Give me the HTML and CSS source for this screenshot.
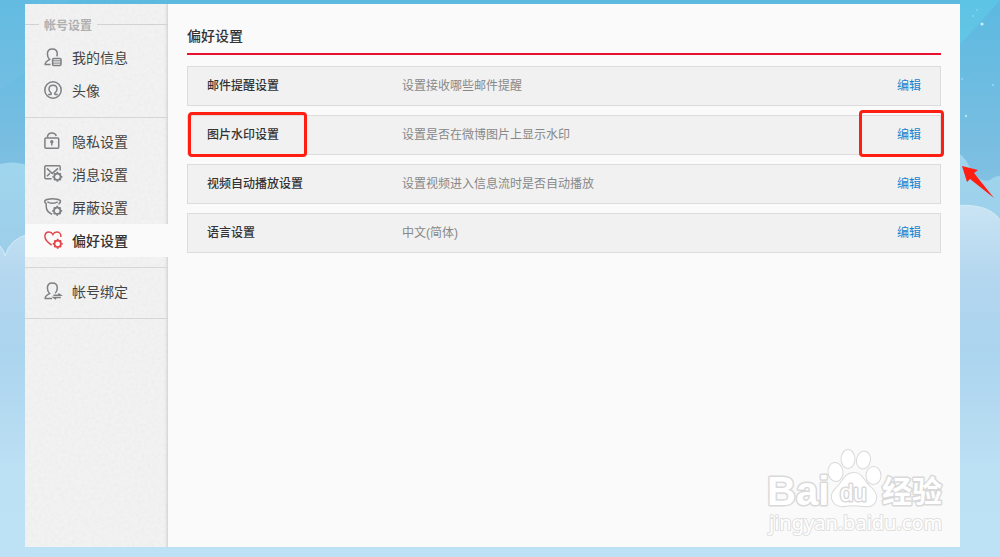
FILE: index.html
```html
<!DOCTYPE html>
<html lang="zh-CN">
<head>
    <meta charset="UTF-8">
    <meta name="viewport" content="width=device-width, initial-scale=1.0">
    <title>偏好设置</title>
    <link rel="stylesheet" href="styles.css">
</head>
<body>
    <!-- sky -->
    <svg class="sky" viewBox="0 0 1000 557" preserveAspectRatio="none" aria-hidden="true">
        <defs>
            <linearGradient id="cloud-back" x1="0" y1="0" x2="0" y2="1">
                <stop offset="0" stop-color="#9fd6ed"/>
                <stop offset="1" stop-color="#9cc9e8"/>
            </linearGradient>
            <linearGradient id="cloud-front" gradientUnits="userSpaceOnUse" x1="0" y1="205" x2="0" y2="557">
                <stop offset="0" stop-color="#c9e4f4"/>
                <stop offset="0.2" stop-color="#b4d7ef"/>
                <stop offset="0.42" stop-color="#abd4ee"/>
                <stop offset="0.75" stop-color="#bce0f4"/>
                <stop offset="1" stop-color="#bde1f5"/>
            </linearGradient>
        </defs>
        <path d="M0 0H70L25 72L0 90Z" fill="#fff" opacity=".04"/>
        <path d="M1000 0L960 45V0Z" fill="#5fd0ea" opacity=".5"/>
        <path d="M0 164Q14 160 30 166V300H0Z" fill="url(#cloud-back)"/>
        <path d="M950 150Q964 153 970 168Q980 184 990 180Q994 176 1000 176V300H950Z" fill="url(#cloud-back)"/>
        <path d="M0 246Q4 250 5 256Q10 238 30 234V557H0Z" fill="url(#cloud-front)"/>
        <path d="M950 206Q988 202 1000 220V557H950Z" fill="url(#cloud-front)"/>
        <path d="M0 246Q4 250 5 256Q10 238 30 234M950 206Q988 202 1000 220" fill="none" stroke="#d2ebf7"/>
        <g fill="#c5ecf7">
            <circle cx="982" cy="24" r="1.6"/>
            <circle cx="973" cy="16" r="1" opacity=".4"/>
            <circle cx="977" cy="10" r="1" opacity=".4"/>
            <circle cx="962" cy="79" r="1" opacity=".5"/>
            <circle cx="993" cy="85" r="1" opacity=".6"/>
            <circle cx="966" cy="116" r="1.2" opacity=".8"/>
        </g>
    </svg>

    <svg class="defs" aria-hidden="true">
        <symbol id="gear" viewBox="-6 -6 12 12">
            <circle r="3.2" fill="none" stroke="currentColor" stroke-width="1.8"/>
            <path d="M0-5V-3.6M0 5V3.6M-5 0H-3.6M5 0H3.6M-3.4-3.4L-2.5-2.5M3.4 3.4L2.5 2.5M-3.4 3.4L-2.5 2.5M3.4-3.4L2.5-2.5" stroke="currentColor" stroke-width="1.8"/>
        </symbol>
    </svg>

    <div class="panel">
        <nav class="sidebar">
            <svg class="grain" aria-hidden="true">
                <filter id="noise">
                    <feTurbulence type="fractalNoise" baseFrequency="0.3" numOctaves="2"/>
                    <feColorMatrix values="0 0 0 0 .4  0 0 0 0 .4  0 0 0 0 .4  .5 0 0 0 -.17"/>
                </filter>
                <rect width="100%" height="100%" filter="url(#noise)"/>
            </svg>
            <h2 class="side-title">帐号设置</h2>
            <ul class="menu">
                <li><a class="menu-item" href="#">
                    <svg class="icon" viewBox="0 0 18 18"><path d="M6.5 16.4H1.2C.9 14 3 12.9 5.6 11.6C4.1 10.2 3.4 8.2 3.4 6C3.4 2.9 5.4 1 8.3 1S13.3 2.9 13.3 6C13.3 7 13.1 7.6 12.7 8.4"/><rect x="8.6" y="10.4" width="8.4" height="7" rx="1.2"/><path d="M9 12.8H17M9 15.1H17" stroke-width="1"/></svg>
                    我的信息</a></li>
                <li><a class="menu-item" href="#">
                    <svg class="icon" viewBox="0 0 18 18"><circle cx="9" cy="9" r="8.2"/><path d="M4.2 13.6H6.5C7.6 13.3 7.5 12.3 6.6 11.5C5.6 10.6 5 9.6 5 8.2C5 5.8 6.7 4.2 9 4.2S13 5.8 13 8.2C13 9.6 12.4 10.6 11.4 11.5C10.5 12.3 10.4 13.3 11.5 13.6H13.8"/></svg>
                    头像</a></li>
            </ul>
            <ul class="menu">
                <li><a class="menu-item" href="#">
                    <svg class="icon" viewBox="0 0 18 18"><rect x=".9" y="5.9" width="13.8" height="10.4" rx="1"/><path d="M3.4 5.5C3.4 2.4 5.2.9 7.8.9C10 .9 11.8 2 12.2 4"/><circle class="solid" cx="7.8" cy="9.8" r="1.7"/><path d="M7.8 10V13.6"/></svg>
                    隐私设置</a></li>
                <li><a class="menu-item" href="#">
                    <svg class="icon" viewBox="0 0 18 18"><path d="M7.6 13.7H2Q.8 13.7 .8 12.5V2Q.8 .8 2 .8H15Q16.2 .8 16.2 2V5.6"/><path d="M3 3.4L6.2 6.6L8.3 8.4L14 3.4M3 11.3L6 8.2"/><use href="#gear" x="7.4" y="5.8" width="12" height="12"/></svg>
                    消息设置</a></li>
                <li><a class="menu-item" href="#">
                    <svg class="icon" viewBox="0 0 18 18"><path d="M8.2 16.2C4 14.5 2.4 12.5 2.3 9L2.1 5.5L.9 4.4V2.5C4 .2 13 .2 16.3 2.5V4.4L15.1 5.5V6.4M3.4 3.8C6 5.6 11 5.6 13.8 3.8"/><use href="#gear" x="7.2" y="6.8" width="12" height="12"/></svg>
                    屏蔽设置</a></li>
                <li><a class="menu-item active" href="#">
                    <svg class="icon" viewBox="0 0 18 18"><path d="M7.6 14.2C4.5 12.1 .9 9.2 .9 5.6C.9 2.9 2.7 1.1 5 1.1C6.8 1.1 8.2 2.1 8.9 3.5C9.6 2.1 11 1.1 12.8 1.1C15.2 1.1 16.9 2.9 16.9 5.2V6"/><use href="#gear" x="7.7" y="6.8" width="12" height="12"/></svg>
                    偏好设置</a></li>
            </ul>
            <ul class="menu">
                <li><a class="menu-item" href="#">
                    <svg class="icon" viewBox="0 0 18 18"><path d="M8 16.4H1.2C.9 14 3 12.9 5.6 11.6C4.1 10.2 3.4 8.2 3.4 6C3.4 2.9 5.4 1 8.3 1S13.3 2.9 13.3 6C13.3 8.2 12.6 9.8 11.2 11.2"/><path d="M9.4 13.2H16.6L14.4 11.6M16.8 15.4H9.6L12 17.2"/></svg>
                    帐号绑定</a></li>
            </ul>
        </nav>

        <main class="content">
            <h1 class="page-title">偏好设置</h1>
            <ul class="settings">
                <li class="row">
                    <span class="name">邮件提醒设置</span>
                    <span class="desc">设置接收哪些邮件提醒</span>
                    <a class="edit" href="#">编辑</a>
                </li>
                <li class="row">
                    <span class="name">图片水印设置</span>
                    <span class="desc">设置是否在微博图片上显示水印</span>
                    <a class="edit" href="#">编辑</a>
                    <span class="mark mark-name"></span>
                    <span class="mark mark-edit"></span>
                    <svg class="arrow" viewBox="0 0 34 34" aria-hidden="true"><path d="M1 1L17 5L13 8L33 33L9 14L6 17Z"/></svg>
                </li>
                <li class="row">
                    <span class="name">视频自动播放设置</span>
                    <span class="desc">设置视频进入信息流时是否自动播放</span>
                    <a class="edit" href="#">编辑</a>
                </li>
                <li class="row">
                    <span class="name">语言设置</span>
                    <span class="desc">中文(简体)</span>
                    <a class="edit" href="#">编辑</a>
                </li>
            </ul>
        </main>

        <svg class="watermark" viewBox="0 0 190 95">
            <text class="wm-big" x="7" y="60">Bai</text>
            <g class="wm-paw">
                <ellipse cx="75.5" cy="27" rx="7" ry="9" transform="rotate(-8 75.5 27)"/>
                <ellipse cx="88" cy="14" rx="6.5" ry="9"/>
                <ellipse cx="103.5" cy="15" rx="6.5" ry="8.5" transform="rotate(12 103.5 15)"/>
                <ellipse cx="113.5" cy="30.5" rx="7" ry="8.5"/>
                <path d="M94 28C102 28 104 36 109 41C115 46 117 50 116 54C115 60 110 62 104 61C97 60 91 60 84 61C77 62 73 58 72 53C71 47 76 44 80 39C84 33 87 28 94 28Z"/>
            </g>
            <text class="wm-du" x="80" y="56">du</text>
            <text class="wm-cn" x="122" y="57">经验</text>
            <text class="wm-url" x="9" y="85">jingyan.baidu.com</text>
        </svg>
    </div>
</body>
</html>
```

FILE: styles.css
```css
* {
    margin: 0;
    padding: 0;
    box-sizing: border-box;
}

body {
    position: relative;
    display: flex;
    min-height: 100vh;
    padding: 4px 40px 10px 25px;
    background: linear-gradient(#5cb9e0, #7dbfe2 165px, #bde1f5 470px);
    font-family: "Liberation Sans", "Noto Sans CJK SC", sans-serif;
    font-size: 12px;
    color: #333;
}

ul {
    list-style: none;
}

a {
    text-decoration: none;
}

.sky {
    position: absolute;
    top: 0;
    left: 0;
    width: 100%;
    height: 100%;
}

.defs {
    position: absolute;
    width: 0;
    height: 0;
}

.panel {
    position: relative;
    display: flex;
    flex: 1;
    background: #fafafa;
}

/* sidebar */
.sidebar {
    position: relative;
    flex: 0 0 143px;
    padding-top: 10px;
    background: #f2f2f2;
    box-shadow: inset -4px 0 3px -3px #ccc;
}

.grain {
    position: absolute;
    top: 0;
    left: 0;
    width: 100%;
    height: 100%;
    opacity: .25;
}

.side-title {
    position: relative;
    display: flex;
    align-items: center;
    gap: 5px;
    height: 20px;
    margin-bottom: 7px;
    font-size: 12px;
    font-weight: bold;
    color: #b0b0b0;
}

.side-title::before,
.side-title::after {
    content: "";
    height: 1px;
    background: #d2d2d2;
}

.side-title::before {
    width: 14px;
}

.side-title::after {
    flex: 1;
}

.menu {
    position: relative;
    padding-bottom: 10px;
    border-bottom: 1px solid #d6d6d6;
}

.menu + .menu {
    padding-top: 7px;
}

.menu-item {
    display: flex;
    align-items: center;
    gap: 10px;
    height: 33px;
    padding: 0 0 2px 19px;
    font-size: 14px;
    color: #444;
}

.menu-item.active {
    background: #fafafa;
    font-weight: 500;
    color: #333;
}

.icon {
    width: 18px;
    height: 18px;
    overflow: visible;
    fill: none;
    stroke: currentColor;
    stroke-width: 1.5;
    color: #7f8084;
}

.icon .solid {
    fill: currentColor;
    stroke: none;
}

.active .icon {
    color: #e2474b;
}

/* content */
.content {
    flex: 1;
    padding: 20px 19px;
}

.page-title {
    height: 31px;
    margin-bottom: 11px;
    border-bottom: 2px solid #e8122e;
    font-size: 14px;
    font-weight: 500;
    line-height: 24px;
}

.settings {
    display: flex;
    flex-direction: column;
    gap: 9px;
}

.row {
    position: relative;
    display: flex;
    align-items: center;
    height: 40px;
    padding: 0 19px 3px;
    border: 1px solid #dcdcdc;
    background: #f1f1f1;
}

.name {
    width: 195px;
    font-weight: 500;
    color: #333;
}

.desc {
    flex: 1;
    color: #888;
}

.edit {
    color: #1585cf;
}

/* red pen marks */
.mark {
    position: absolute;
    border: 3px solid #ff1e12;
    border-radius: 4px;
}

.mark-name {
    top: -4px;
    left: 0;
    width: 119px;
    height: 45px;
}

.mark-edit {
    top: -6px;
    right: -4px;
    width: 85px;
    height: 47px;
}

.arrow {
    position: absolute;
    top: 49px;
    right: -55px;
    width: 34px;
    height: 34px;
    fill: #ff1e12;
}

/* watermark */
.watermark {
    position: absolute;
    right: 10px;
    bottom: 7px;
    width: 190px;
    height: 95px;
    fill: #fff;
    stroke: #d9d9d9;
    stroke-width: 2;
    stroke-linejoin: round;
    paint-order: stroke;
}

.wm-big {
    font: bold 40px "Liberation Sans", sans-serif;
    stroke-width: 3;
}

.wm-du {
    font: 24px "Liberation Sans", sans-serif;
    stroke-width: 3;
}

.wm-cn {
    font: bold 30px "Noto Sans CJK SC", sans-serif;
    stroke-width: 3;
}

.wm-url {
    font: 20px "Noto Sans", sans-serif;
    stroke: #e0e0e0;
}
```
